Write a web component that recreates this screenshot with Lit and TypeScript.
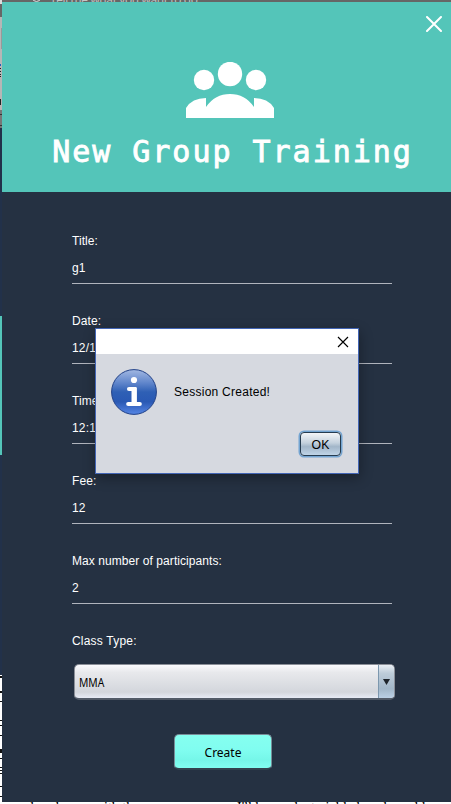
import { LitElement, html, svg, css } from "lit";
import { customElement, property } from "lit/decorators.js";

@customElement("form-field")
class FormField extends LitElement {
  @property() label = "";
  @property() value = "";
  static styles = css`
    :host { display: block; height: 80px; }
    .label { height: 16px; line-height: 16px; letter-spacing: 0.07px; }
    .value { height: 34px; line-height: 38px; letter-spacing: 0.2px; border-bottom: 1px solid #b0b4bd; }
  `;
  render() {
    return html`<div class="label">${this.label}</div><div class="value">${this.value}</div>`;
  }
}

@customElement("message-dialog")
class MessageDialog extends LitElement {
  static styles = css`
    :host { display: flex; flex-direction: column; box-sizing: border-box; border: 1px solid #4265b5; background: #d6d9e0; color: #000; box-shadow: 1px 4px 12px 0 rgba(0,0,0,.32); }
    .bar { height: 25px; background: #fff; display: flex; justify-content: flex-end; align-items: center; padding-right: 9px; }
    .bar svg { display: block; }
    .body { display: flex; align-items: center; padding: 15px 15px 0; gap: 17px; height: 46px; }
    .actions { display: flex; justify-content: flex-end; padding: 17px 17px 0 0; }
    .ok { box-sizing: border-box; width: 41px; height: 24px; border: 1px solid #263c50; border-radius: 4px; text-align: center; line-height: 24px; background: linear-gradient(#f3f5f8, #c4d1dd 45%, #a2b6c9 62%, #bfd4e7); box-shadow: 0 0 0 1.5px #73a4d1; font-size: 12.3px; }
    .text { letter-spacing: 0.26px; }
  `;
  render() {
    return html`
      <div class="bar"><svg width="12" height="12" viewBox="0 0 12 12"><path d="M1 1L11 11M11 1L1 11" stroke="#000" stroke-width="1.15"/></svg></div>
      <div class="body">
        <svg width="46" height="46" viewBox="0 0 46 46">
          <defs><linearGradient id="g" x1="0" y1="0" x2="0" y2="1"><stop offset="0" stop-color="#a2b8e2"/><stop offset=".3" stop-color="#5f85cb"/><stop offset=".5" stop-color="#2f60b5"/><stop offset=".72" stop-color="#2a59b4"/><stop offset="1" stop-color="#5686e5"/></linearGradient></defs>
          <circle cx="23" cy="23" r="22.4" fill="url(#g)" stroke="#214187" stroke-width="1"/>
          <circle cx="23" cy="11" r="3.1" fill="#fff"/>
          <path d="M18 20H23.5V35M17.2 35H28.8" fill="none" stroke="#fff" stroke-width="4.1" stroke-linecap="round"/>
          <path d="M20.5 19H25.8V36H20.5Z" fill="#fff"/>
        </svg>
        <span class="text">Session Created!</span>
      </div>
      <div class="actions"><div class="ok">OK</div></div>`;
  }
}

@customElement("app-root")
class AppRoot extends LitElement {
  static styles = css`
    :host { display: block; position: relative; width: 451px; height: 804px; overflow: hidden; background: #fff; font: 12px "Liberation Sans", sans-serif; color: #fff; }
    .toolbar { position: absolute; left: 0; top: 0; width: 451px; height: 2px; background: #666; overflow: hidden; color: #c4c4c4; }
    .tell { position: absolute; left: 50px; top: -6px; line-height: 12px; font-family: "Open Sans", sans-serif; letter-spacing: -0.38px; white-space: nowrap; }
    .bulb { position: absolute; left: 32px; top: -7px; width: 7px; height: 7px; border: 1px solid #ddd; border-radius: 50%; }
    .edge { position: absolute; left: 0; top: 0; width: 2px; height: 804px; }
    .edge svg { display: block; }
    .page { position: absolute; left: 2px; top: 2px; width: 449px; height: 800px; background: #253142; }
    .header { height: 190px; background: #54c5b9; display: flex; flex-direction: column; align-items: center; box-sizing: border-box; padding-top: 14px; }
    .close { align-self: flex-end; margin-right: 9px; display: block; }
    .people { display: block; margin: 30px 0 0 7px; }
    .title { margin: 14px 0 0 12px; white-space: pre; font: 30px/40px "DejaVu Sans Mono", monospace; letter-spacing: 1.98px; -webkit-text-stroke: .85px #fff; }
    .form { padding: 41px 54px 0 70px; display: flex; flex-direction: column; }
    form-field { width: 320px; }
    .type { height: 16px; line-height: 16px; letter-spacing: 0.2px; }
    .select { box-sizing: border-box; margin: 15px 0 0 2px; width: 321px; height: 36px; border: 1px solid #8b8f98; border-bottom: 2px solid #525b68; border-radius: 5px; background: linear-gradient(#fafafd, #e8e9ec 22%, #d3d6dc 82%, #e7ebf5); color: #000; display: flex; align-items: stretch; overflow: hidden; }
    .choice { flex: 1; padding-left: 4px; line-height: 35px; font-family: "Noto Sans", sans-serif; }
    .choice span { display: inline-block; transform: scaleX(.86); transform-origin: left; }
    .arrow { width: 15px; border-left: 1px solid #7c97ae; background: linear-gradient(#e9eef4, #bdccd9 25%, #a2b7c9 72%, #bbd0e5); display: flex; align-items: center; justify-content: center; }
    .create { box-sizing: border-box; align-self: flex-start; margin: 34px 0 0 102px; width: 98px; height: 36px; border: 1px solid #788d98; border-bottom: 2px solid #33434f; border-radius: 5px; background: linear-gradient(#86fff0, #80fdf0 45%, #76f7e9 75%, #82fff1); color: #000; text-align: center; line-height: 35px; font-family: "Noto Sans", sans-serif; }
    .dialog { position: absolute; left: 95px; top: 328px; width: 264px; height: 146px; }
    .document { position: absolute; left: 0; top: 802px; width: 451px; height: 2px; overflow: hidden; color: #000; font: 14px/14px "Liberation Serif", serif; white-space: pre; }
    .line { position: absolute; top: -1px; }
    .first { left: 10px; }
    .second { left: 237px; }
  `;
  render() {
    const marks = [[676, 2], [691, 2], [701, 1], [720, 1], [725, 1], [735, 1], [749, 4], [758, 1], [767, 1], [770, 1], [773, 1], [786, 1], [796, 1]];
    return html`
      <div class="toolbar"><span class="bulb"></span><span class="tell">Tell me what you want to do</span></div>
      <div class="edge"><svg width="2" height="804" shape-rendering="crispEdges">
        <path fill="#666" d="M0 3H2V17H0Z"/><path fill="#ddd" d="M0 0H2V4H0Z"/><path fill="#b6b6b6" d="M0 17H2V110H0Z"/><path fill="#999" d="M1 28H2V49H1Z"/>
        <path fill="#245dba" d="M0 64H1V66H0Z"/><path fill="#222" d="M0 68H1V69H0ZM0 71H1V72H0ZM0 74H1V75H0ZM0 77H1V76H0ZM0 99H1V105H0Z"/>
        <path fill="#777" d="M0 110H2V128H0Z"/><path fill="#333" d="M0 114H2V115H0ZM0 125H2V126H0Z"/><path fill="#22314a" d="M0 128H2V675H0Z"/><path fill="#54c5b9" d="M0 316H2V455H0Z"/>
        ${marks.map(([y, h]) => svg`<rect x="0" y=${y} width="2" height=${h} fill="#111"/>`)}
      </svg></div>
      <div class="page">
        <div class="header">
          <svg class="close" width="16" height="16" viewBox="0 0 16 16"><path d="M1 1L15 15M15 1L1 15" stroke="#fff" stroke-width="2" stroke-linecap="round"/></svg>
          <svg class="people" width="88" height="56" viewBox="0 0 88 56" fill="#fff"><circle cx="18" cy="18" r="10.2"/><circle cx="44" cy="12" r="12.2"/><circle cx="70" cy="18" r="10.2"/><path d="M0 56V46Q6 36 20 36V45Q29 32 44 32T68 45V36Q82 36 88 46V56Z"/></svg>
          <div class="title">New Group Training</div>
        </div>
        <div class="form">
          <form-field label="Title:" value="g1"></form-field>
          <form-field label="Date:" value="12/12/2020"></form-field>
          <form-field label="Time:" value="12:12"></form-field>
          <form-field label="Fee:" value="12"></form-field>
          <form-field label="Max number of participants:" value="2"></form-field>
          <div class="type">Class Type:</div>
          <div class="select"><div class="choice"><span>MMA</span></div><div class="arrow"><svg width="7" height="6"><path d="M0 0H7L3.5 6Z" fill="#1e252c"/></svg></div></div>
          <div class="create">Create</div>
        </div>
      </div>
      <message-dialog class="dialog"></message-dialog>
      <div class="document"><span class="line first"> and each year with the</span><span class="line second">I'll be product yielded, and would</span></div>`;
  }
}
